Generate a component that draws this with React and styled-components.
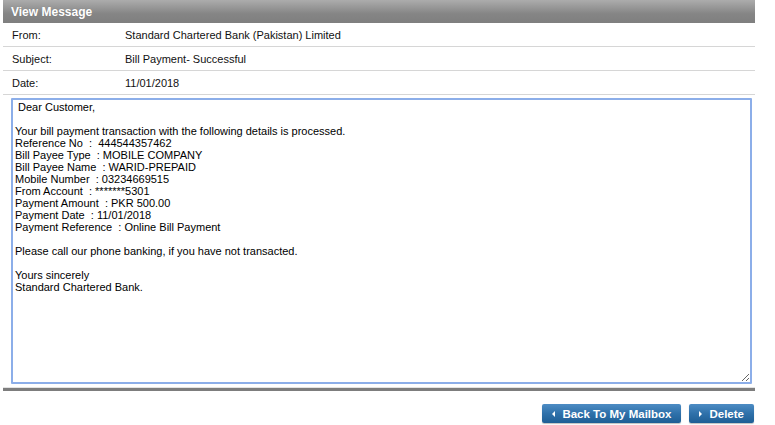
import React from "react";
import styled, { createGlobalStyle } from "styled-components";

const Global = createGlobalStyle`
  html, body { margin: 0; padding: 0; background: #fff; }
  body { font-family: "Liberation Sans", Arial, sans-serif; }
`;

const Page = styled.div`
  width: 775px;
  height: 425px;
  padding: 0 20px 0 3px;
  box-sizing: border-box;
  display: flex;
  flex-direction: column;
`;

const Panel = styled.div`
  width: 752px;
  display: flex;
  flex-direction: column;
`;

const Header = styled.div`
  height: 23px;
  background: linear-gradient(#acacac, #858585 60%, #7f7f7f);
  color: #fff;
  font-weight: bold;
  font-size: 12px;
  display: flex;
  align-items: center;
  padding-left: 8px;
  text-shadow: 0 0 1px rgba(0, 0, 0, 0.15);
`;

const Row = styled.div`
  height: 23px;
  border-bottom: 1px solid #d6d6d6;
  display: grid;
  grid-template-columns: 113px 1fr;
  align-items: center;
  padding-left: 9px;
  font-size: 11px;
  color: #111;
`;

const Label = styled.div`
  font-weight: normal;
`;

const Value = styled.div``;

const Body = styled.div`
  padding: 3px 3px 1px 8px;
`;

const MessageArea = styled.textarea`
  display: block;
  width: 741px;
  height: 286px;
  box-sizing: border-box;
  border: 2px solid #8caee9;
  border-radius: 1px;
  padding: 1px 2px;
  margin: 0;
  font-family: "Liberation Sans", Arial, sans-serif;
  font-size: 11px;
  line-height: 12px;
  color: #000;
  outline: none;
  resize: both;
`;

const Divider = styled.div`
  margin-top: 2px;
  border-top: 1px solid #e3e3e3;
  border-bottom: 3px solid #7d7d7d;
`;

const Actions = styled.div`
  display: flex;
  justify-content: flex-end;
  gap: 8px;
  padding-top: 13px;
  padding-right: 1px;
`;

const Button = styled.button`
  height: 19px;
  padding: 0 10px;
  border: none;
  border-radius: 2px;
  background: linear-gradient(#4d8cc4, #2f71aa 50%, #1e5e95);
  color: #fff;
  font-family: "Liberation Sans", Arial, sans-serif;
  font-weight: bold;
  font-size: 11.5px;
  display: flex;
  align-items: center;
  gap: 7px;
  box-shadow: 0 1px 1px rgba(0, 0, 0, 0.25);
  cursor: pointer;
`;

const Arrow = styled.span`
  width: 0;
  height: 0;
  border-top: 3px solid transparent;
  border-bottom: 3px solid transparent;
  ${(p) =>
    p.$dir === "left"
      ? "border-right: 3px solid #fff;"
      : "border-left: 3px solid #fff;"}
`;

const message = ` Dear Customer,

Your bill payment transaction with the following details is processed.
Reference No  :  444544357462
Bill Payee Type  : MOBILE COMPANY
Bill Payee Name  : WARID-PREPAID
Mobile Number  : 03234669515
From Account  : *******5301
Payment Amount  : PKR 500.00
Payment Date  : 11/01/2018
Payment Reference  : Online Bill Payment

Please call our phone banking, if you have not transacted.

Yours sincerely
Standard Chartered Bank.`;

const fields = [
  ["From:", "Standard Chartered Bank (Pakistan) Limited"],
  ["Subject:", "Bill Payment- Successful"],
  ["Date:", "11/01/2018"],
];

export default function App() {
  return (
    <>
      <Global />
      <Page>
        <Panel>
          <Header>View Message</Header>
          {fields.map(([l, v]) => (
            <Row key={l}>
              <Label>{l}</Label>
              <Value>{v}</Value>
            </Row>
          ))}
          <Body>
            <MessageArea readOnly defaultValue={message} />
          </Body>
          <Divider />
          <Actions>
            <Button>
              <Arrow $dir="left" />
              Back To My Mailbox
            </Button>
            <Button>
              <Arrow $dir="right" />
              Delete
            </Button>
          </Actions>
        </Panel>
      </Page>
    </>
  );
}
